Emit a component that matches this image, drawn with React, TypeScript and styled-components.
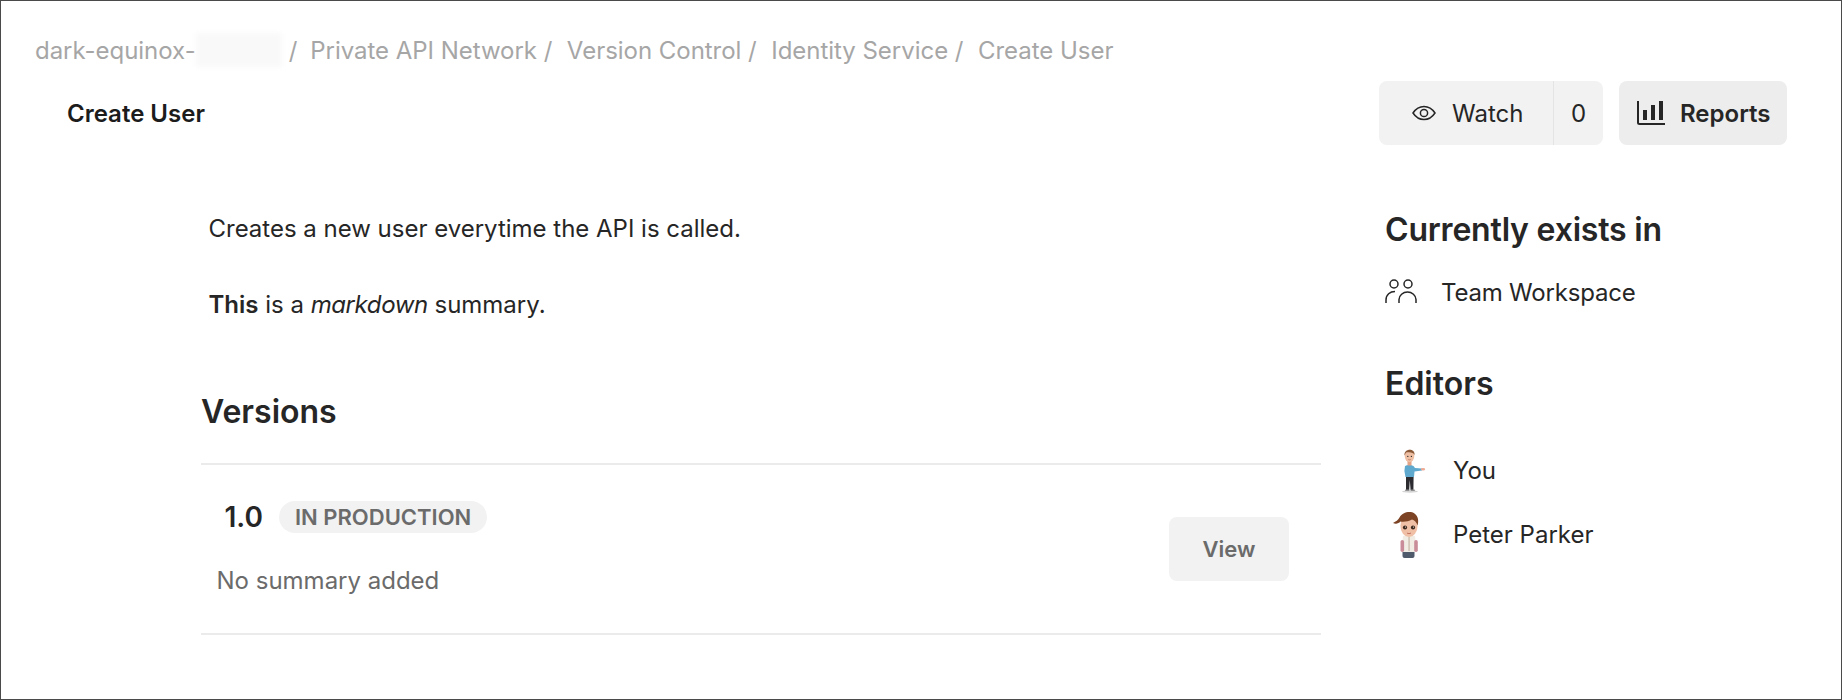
import React from 'react';
import styled, { createGlobalStyle } from 'styled-components';

const GlobalStyle = createGlobalStyle`
  html, body {
    margin: 0;
    padding: 0;
    background: #fff;
  }
  body {
    font-family: Inter, "Noto Sans", "Liberation Sans", sans-serif;
    color: #262626;
  }
`;

const Frame = styled.div`
  width: 1842px;
  height: 700px;
  box-sizing: border-box;
  border: 1px solid #4a4a4a;
  overflow: hidden;
`;

const Breadcrumb = styled.nav`
  display: flex;
  align-items: center;
  height: 38px;
  margin-top: 30px;
  padding-left: 34px;
  font-size: 24px;
  letter-spacing: -0.03px;
  color: #a6a6a6;
`;

const Crumb = styled.span`
  white-space: pre;
`;

const Redacted = styled.span`
  width: 86px;
  height: 34px;
  margin-right: 7px;
  background: #f9f9f9;
  filter: blur(2px);
`;

const Sep = styled.span<{ $gap?: number }>`
  margin-right: ${({ $gap }) => $gap ?? 14.5}px;
`;

const Header = styled.header`
  display: flex;
  align-items: center;
  justify-content: space-between;
  height: 64px;
  margin-top: 12px;
  padding: 0 54px 0 66px;
`;

const PageTitle = styled.h1`
  margin: 0;
  font-size: 24px;
  font-weight: 600;
  color: #1c1c1c;
`;

const Actions = styled.div`
  display: flex;
  gap: 16px;
`;

const WatchGroup = styled.div`
  display: flex;
  height: 64px;
  border-radius: 8px;
  background: #f2f2f2;
  overflow: hidden;
`;

const WatchButton = styled.button`
  display: flex;
  align-items: center;
  gap: 16px;
  width: 175px;
  padding: 0 0 0 33px;
  border: 0;
  border-right: 1px solid #e4e4e4;
  background: transparent;
  font: 400 24px Inter, sans-serif;
  color: #262626;
`;

const WatchCount = styled.span`
  display: flex;
  align-items: center;
  justify-content: center;
  width: 49px;
  font-size: 24px;
  color: #262626;
`;

const ReportsButton = styled.button`
  display: flex;
  align-items: center;
  gap: 15px;
  width: 168px;
  height: 64px;
  padding: 0 0 0 18px;
  border: 0;
  border-radius: 8px;
  background: #ededed;
  font: 600 24px Inter, sans-serif;
  color: #262626;
`;

const Main = styled.main`
  display: grid;
  grid-template-columns: 1120px 1fr;
  column-gap: 64px;
  margin-top: 66px;
  padding-left: 200px;
`;

const Description = styled.div`
  padding-left: 7.5px;
  font-size: 24px;
  line-height: 36px;
  letter-spacing: -0.01px;
  color: #262626;
`;

const Paragraph = styled.p`
  margin: 0 0 40px;
  &:last-child {
    margin-bottom: 0;
  }
`;

const Strong = styled.strong`
  font-weight: 600;
`;

const Emphasis = styled.em`
  letter-spacing: -0.4px;
`;

const SectionTitle = styled.h2<{ $top?: number }>`
  margin: ${({ $top }) => $top ?? 0}px 0 0;
  font-size: 32px;
  line-height: 40px;
  font-weight: 600;
  color: #262626;
`;

const SideTitle = styled(SectionTitle)`
  position: relative;
  top: -1px;
  letter-spacing: -0.2px;
`;

const VersionRow = styled.div`
  display: flex;
  align-items: center;
  justify-content: space-between;
  height: 168px;
  margin-top: 31px;
  padding: 0 32px 0 15.5px;
  border-top: 2px solid #ebebeb;
  border-bottom: 2px solid #ebebeb;
`;

const VersionInfo = styled.div`
  display: flex;
  flex-direction: column;
  gap: 29px;
`;

const VersionHead = styled.div`
  display: flex;
  align-items: center;
  gap: 16px;
  padding-left: 8px;
`;

const VersionNumber = styled.span`
  font-size: 28px;
  font-weight: 600;
  color: #262626;
`;

const Badge = styled.span`
  display: flex;
  align-items: center;
  height: 32px;
  padding: 0 16px;
  border-radius: 16px;
  background: #f2f2f2;
  font-size: 22px;
  font-weight: 600;
  color: #6b6b6b;
`;

const Summary = styled.div`
  font-size: 24px;
  line-height: 36px;
  color: #6b6b6b;
`;

const ViewButton = styled.button`
  width: 120px;
  height: 64px;
  border: 0;
  border-radius: 8px;
  background: #f2f2f2;
  font: 600 22px Inter, sans-serif;
  color: #6b6b6b;
`;

const Sidebar = styled.aside`
  display: flex;
  flex-direction: column;
`;

const WorkspaceRow = styled.div`
  display: flex;
  align-items: center;
  gap: 24px;
  height: 36px;
  margin-top: 23px;
  font-size: 24px;
  letter-spacing: -0.2px;
  color: #262626;
`;

const EditorList = styled.div`
  display: flex;
  flex-direction: column;
  gap: 14px;
  margin-top: 41px;
`;

const EditorRow = styled.div`
  display: flex;
  align-items: center;
  gap: 20px;
  height: 50px;
  font-size: 24px;
  color: #262626;
`;

const EyeIcon = () => (
  <svg width="24" height="24" viewBox="0 0 24 24" fill="none" stroke="#262626" strokeWidth="1.5">
    <path d="M1 12C4 7.5 7.5 5.5 12 5.5S20 7.5 23 12C20 16.5 16.5 18.5 12 18.5S4 16.5 1 12Z" />
    <circle cx="12" cy="12" r="3.6" />
  </svg>
);

const ChartIcon = () => (
  <svg width="28" height="24" viewBox="0 0 28 24" fill="none">
    <path d="M1 0V21.5C1 22.4 1.6 23 2.5 23H28" stroke="#262626" strokeWidth="2" />
    <rect x="6" y="9" width="4" height="10" fill="#262626" />
    <rect x="14" y="4" width="4" height="15" fill="#262626" />
    <rect x="22" y="0" width="4" height="19" fill="#262626" />
  </svg>
);

const TeamIcon = () => (
  <svg width="32" height="26" viewBox="0 0 32 26" fill="none" stroke="#262626" strokeWidth="1.5">
    <circle cx="9" cy="5" r="4" />
    <circle cx="23" cy="5" r="4" />
    <path d="M1 24V21C1 15.5 5 12.5 10 12.5" />
    <path d="M14 24V20.5C14 16.5 18 13 22.5 13C27 13 31 16.5 31 20.5V24" />
  </svg>
);

const AvatarYou = () => (
  <svg width="48" height="50" viewBox="0 0 48 50">
    <ellipse cx="25" cy="46.5" rx="8" ry="1.2" fill="#d4d4d4" />
    <path d="M21 31L21 45H24.2L24.8 35L25.6 45H28.4L28.6 31Z" fill="#2b2b30" />
    <rect x="20" y="44.5" width="4.5" height="1.6" rx="0.8" fill="#8d8d8d" />
    <rect x="25.5" y="44.5" width="4.5" height="1.6" rx="0.8" fill="#8d8d8d" />
    <path d="M20 21C21.5 19.5 27 19.5 28.5 21L30 23L37 23.4V25.4L29.5 26.4L29 32H20.5L19.4 26Z" fill="#5fa9cf" />
    <ellipse cx="38" cy="24.2" rx="2.2" ry="1.2" fill="#eda992" />
    <rect x="22.5" y="16" width="4" height="4.5" fill="#e2a285" />
    <ellipse cx="24.5" cy="11" rx="4.8" ry="6.2" fill="#efbfa4" />
    <path d="M19.5 10.5C18.5 3.5 30 2.2 29.7 10C28.5 7.5 25 6.6 21 7.5Z" fill="#8a5a38" />
    <circle cx="22.8" cy="11.4" r="0.65" fill="#2b2b2b" />
    <circle cx="26.4" cy="11.4" r="0.65" fill="#2b2b2b" />
    <path d="M23.2 14.4C24 15 25 15 25.8 14.4" stroke="#a9604c" strokeWidth="0.6" fill="none" />
  </svg>
);

const AvatarPeter = () => (
  <svg width="48" height="50" viewBox="0 0 48 50">
    <rect x="17.5" y="41" width="12" height="8" rx="2" fill="#4f5a6b" />
    <path d="M18 27C20 26 28 26 30 27L32 43H16.5Z" fill="#f1ece4" />
    <rect x="15.5" y="31" width="3.6" height="12" rx="1.8" fill="#c98d99" />
    <rect x="29.2" y="31" width="3.6" height="12" rx="1.8" fill="#c98d99" />
    <rect x="23.6" y="28" width="0.9" height="14" fill="#b9a692" />
    <ellipse cx="24" cy="17" rx="8.6" ry="11" fill="#efbfa6" />
    <path d="M8 14C11 12.5 13 11 14.5 8.5C17 3.5 25 1.5 29.5 4.5C33.5 7.5 33.8 12 32.6 16.5C31.5 13 29.5 11 27 10.5C23.5 12.5 19 13 15.5 12.5C13.5 14.5 11 15.3 8 14Z" fill="#7c4324" />
    <circle cx="20" cy="18.5" r="2.1" fill="#3d281d" />
    <circle cx="28" cy="18.5" r="2.1" fill="#3d281d" />
    <circle cx="20.5" cy="18" r="0.6" fill="#ffffff" />
    <circle cx="28.5" cy="18" r="0.6" fill="#ffffff" />
    <path d="M22 24C23.3 24.8 24.7 24.8 26 24" stroke="#b5614f" strokeWidth="0.8" fill="none" />
  </svg>
);

const crumbs = ['Private API Network', 'Version Control', 'Identity Service'];

export default function App() {
  return (
    <Frame>
      <GlobalStyle />
      <Breadcrumb>
        <Crumb>dark-equinox-</Crumb>
        <Redacted />
        <Sep $gap={13}>/</Sep>
        {crumbs.map((crumb) => (
          <React.Fragment key={crumb}>
            <Crumb>{crumb}&nbsp;</Crumb>
            <Sep>/</Sep>
          </React.Fragment>
        ))}
        <Crumb>Create User</Crumb>
      </Breadcrumb>

      <Header>
        <PageTitle>Create User</PageTitle>
        <Actions>
          <WatchGroup>
            <WatchButton>
              <EyeIcon />
              Watch
            </WatchButton>
            <WatchCount>0</WatchCount>
          </WatchGroup>
          <ReportsButton>
            <ChartIcon />
            Reports
          </ReportsButton>
        </Actions>
      </Header>

      <Main>
        <section>
          <Description>
            <Paragraph>Creates a new user everytime the API is called.</Paragraph>
            <Paragraph>
              <Strong>This</Strong> is a <Emphasis>markdown</Emphasis> summary.
            </Paragraph>
          </Description>
          <SectionTitle $top={69}>Versions</SectionTitle>
          <VersionRow>
            <VersionInfo>
              <VersionHead>
                <VersionNumber>1.0</VersionNumber>
                <Badge>IN PRODUCTION</Badge>
              </VersionHead>
              <Summary>No summary added</Summary>
            </VersionInfo>
            <ViewButton>View</ViewButton>
          </VersionRow>
        </section>

        <Sidebar>
          <SideTitle>Currently exists in</SideTitle>
          <WorkspaceRow>
            <TeamIcon />
            Team Workspace
          </WorkspaceRow>
          <SectionTitle $top={54}>Editors</SectionTitle>
          <EditorList>
            <EditorRow>
              <AvatarYou />
              You
            </EditorRow>
            <EditorRow>
              <AvatarPeter />
              Peter Parker
            </EditorRow>
          </EditorList>
        </Sidebar>
      </Main>
    </Frame>
  );
}
